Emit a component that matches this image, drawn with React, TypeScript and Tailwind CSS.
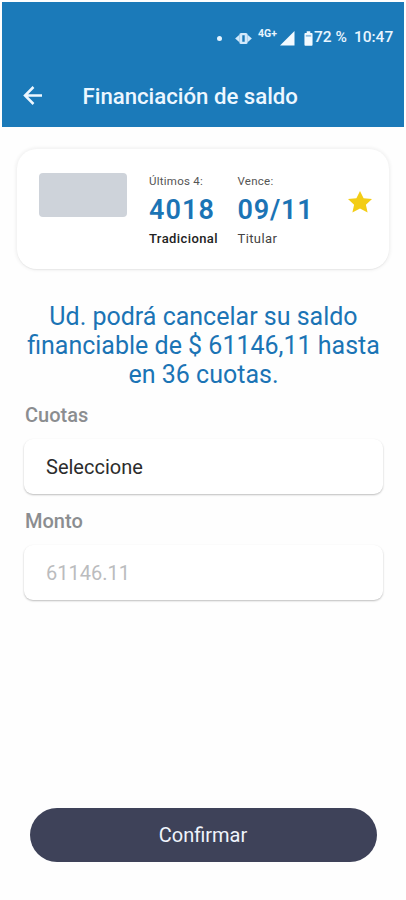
import React from "react";

function StatusBar() {
  return (
    <div className="flex h-[70px] items-center pl-[215px] pt-[2px] text-[#e8f5ff]">
      <span className="size-[5px] rounded-full bg-[#e4f3ff]" />
      <svg className="ml-[13px]" width="17" height="13" viewBox="0 0 18 14" fill="#d3e8fa">
        <path d="M0 7 4.600 3v8zM18 7l-4.600-4v8z" />
        <path fillRule="evenodd" d="M6.500 1h5a2 2 0 0 1 2 2v8a2 2 0 0 1-2 2h-5a2 2 0 0 1-2-2V3a2 2 0 0 1 2-2zM7.700 3.500v7h2.600v-7z" />
      </svg>
      <span className="mb-[7px] ml-[6px] w-[20px] whitespace-nowrap text-[10.5px] leading-none font-bold">4G+</span>
      <svg className="ml-[2px]" width="15" height="15" viewBox="0 0 15 15" fill="#f3faff">
        <path d="M14.500 0v14.500H0z" />
      </svg>
      <svg className="ml-[9px]" width="9" height="15" viewBox="0 0 10 16" fill="#f3faff">
        <path d="M3 0h4v2h1.500a1 1 0 0 1 1 1v12a1 1 0 0 1-1 1h-7a1 1 0 0 1-1-1V3a1 1 0 0 1 1-1H3z" />
        <path d="M2 4h6v2H2z" fill="#8fbfe2" />
      </svg>
      <span className="ml-px whitespace-nowrap text-[15.5px] leading-none font-medium">72 %</span>
      <span className="ml-[7px] whitespace-nowrap text-[15.5px] leading-none font-medium">10:47</span>
    </div>
  );
}

function TitleBar() {
  return (
    <div className="flex h-[50px] items-center pb-px pl-[21px] text-[#edf7ff]">
      <svg className="mb-[3px]" width="20" height="20" viewBox="0 0 20 20" fill="none" stroke="#edf7ff" strokeWidth="2.500">
        <path d="M19 10.500H2M10.500 2 2 10.500l8.500 8.500" />
      </svg>
      <h1 className="ml-[39.5px] text-[22.2px] leading-none font-medium whitespace-nowrap">Financiación de saldo</h1>
    </div>
  );
}

function CardSummary() {
  return (
    <section className="mx-auto mt-[22px] flex h-[120px] w-[372px] rounded-[20px] bg-white shadow-[0_0_3px_2px_rgba(0,0,0,0.045),0_1px_1px_rgba(0,0,0,0.05)]">
      <div className="mt-[24px] ml-[22px] h-[44px] w-[88px] rounded-[4px] bg-[#ced3da]" />
      <div className="mt-[25px] ml-[22px] w-[88px] whitespace-nowrap">
        <p className="h-[15px] text-[11.5px] leading-[15px] tracking-[0.25px] text-[#555]">Últimos 4:</p>
        <p className="h-[42px] text-[27px] leading-[42px] font-semibold tracking-[1.1px] text-[#1b74b5]">4018</p>
        <p className="text-[13px] leading-[16px] font-medium tracking-[0.4px] text-[#222]">Tradicional</p>
      </div>
      <div className="mt-[25px] ml-[0.5px] w-[88px] whitespace-nowrap">
        <p className="h-[15px] text-[11.5px] leading-[15px] tracking-[0.25px] text-[#555]">Vence:</p>
        <p className="h-[42px] text-[27px] leading-[42px] font-semibold tracking-[0.8px] text-[#1b74b5]">09/11</p>
        <p className="text-[13px] leading-[16px] tracking-[0.4px] text-[#444]">Titular</p>
      </div>
      <svg className="mt-[42px] ml-[22.5px]" width="24" height="22" viewBox="0 0 24 22" fill="#f3cd16">
        <path d="m12 0 3.600 7.200 8.400.8-6.100 5.700 1.700 7.800L12 17.600l-7.600 3.900 1.700-7.800L0 8l8.400-.8z" />
      </svg>
    </section>
  );
}

function Field({ label, value, muted }: { label: string; value: string; muted?: boolean }) {
  return (
    <div className="h-[106px]">
      <label className="block h-[36px] text-[20px] leading-[24px] font-medium text-[#8b8d90]">{label}</label>
      <div className="-ml-px flex h-[55px] w-[359px] items-center rounded-[9px] bg-white pl-[22px] shadow-[0_1px_2px_rgba(0,0,0,0.26)]">
        <span className={muted ? "text-[20px] text-[#bbbcbe]" : "text-[20px] text-[#2c2c2c]"}>{value}</span>
      </div>
    </div>
  );
}

export default function App() {
  return (
    <main className="flex h-[900px] w-[406px] flex-col bg-[#fefefe] pt-[2px] font-[Roboto,sans-serif]">
      <header className="mr-[2px] ml-[2px] h-[125px] shrink-0 bg-[#1b7ab9]">
        <StatusBar />
        <TitleBar />
      </header>
      <CardSummary />
      <p className="mt-[33px] pl-px text-center text-[25px] leading-[29px] font-[450] whitespace-nowrap text-[#1b74b5]">
        Ud. podrá cancelar su saldo
        <br />
        financiable de $ 61146,11 hasta
        <br />
        en 36 cuotas.
      </p>
      <form className="mt-[14px] ml-[25px]">
        <Field label="Cuotas" value="Seleccione" />
        <Field label="Monto" value="61146.11" muted />
      </form>
      <button className="mx-auto mt-auto mb-[38px] h-[54px] w-[347px] rounded-full bg-[#3e4259] text-[20px] text-[#eff4fc]">
        Confirmar
      </button>
    </main>
  );
}
